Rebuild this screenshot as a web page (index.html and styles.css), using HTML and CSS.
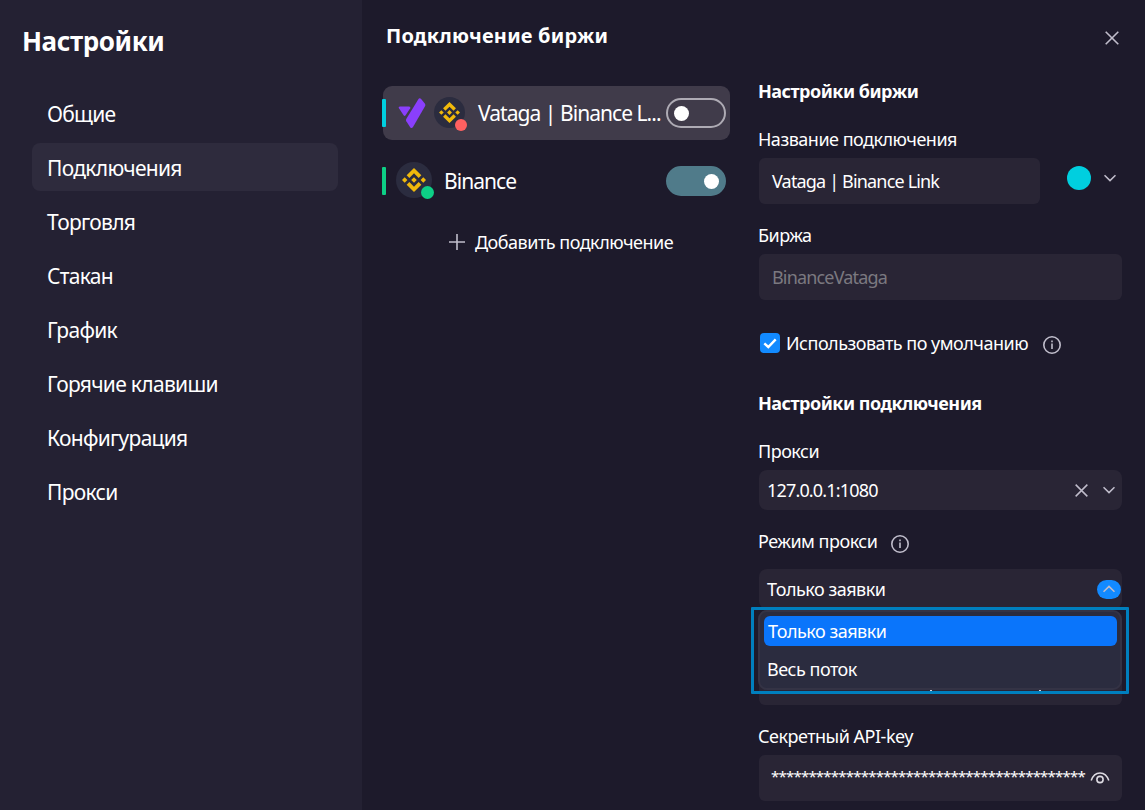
FILE: index.html
```html
<!DOCTYPE html>
<html lang="ru">
<head>
    <meta charset="UTF-8">
    <meta name="viewport" content="width=device-width, initial-scale=1.0">
    <title>Настройки</title>
    <link rel="stylesheet" href="styles.css">
</head>
<body>
    <!-- shared icons -->
    <svg class="sprite" width="0" height="0">
        <symbol id="binance" viewBox="0 0 24 24">
            <path d="M7.35 9.95 12 5.3l4.65 4.65 2.7-2.7L12 0 4.65 7.25zM0 12l2.7-2.7L5.4 12l-2.7 2.7zM7.35 14.05 12 18.7l4.65-4.65 2.7 2.7L12 24l-7.35-7.25zM18.6 12l2.7-2.7L24 12l-2.7 2.7zM9.2 12 12 9.2l2.8 2.8-2.8 2.8z"/>
        </symbol>
        <symbol id="info" viewBox="0 0 18 18">
            <circle cx="9" cy="9" r="8.2"/>
            <path d="M9 7.500v5.500M9 4.500v1.700"/>
        </symbol>
        <symbol id="chevron" viewBox="0 0 12 8">
            <path d="M0.5 1.2 6 6.6l5.5-5.4"/>
        </symbol>
        <symbol id="cross" viewBox="0 0 14 14">
            <path d="M0.7 0.7 13.3 13.3M13.3 0.7 0.7 13.3"/>
        </symbol>
    </svg>

    <div class="window">
        <aside class="sidebar">
            <h1 class="sidebar-title">Настройки</h1>
            <nav class="menu">
                <a class="menu-item">Общие</a>
                <a class="menu-item active">Подключения</a>
                <a class="menu-item">Торговля</a>
                <a class="menu-item">Стакан</a>
                <a class="menu-item">График</a>
                <a class="menu-item">Горячие клавиши</a>
                <a class="menu-item">Конфигурация</a>
                <a class="menu-item">Прокси</a>
            </nav>
        </aside>

        <main class="content">
            <header class="header">
                <h2 class="header-title">Подключение биржи</h2>
                <svg class="icon close"><use href="#cross"/></svg>
            </header>

            <div class="columns">
                <section class="connections">
                    <div class="connection selected">
                        <span class="bar cyan"></span>
                        <svg class="vataga" viewBox="0 0 28 31">
                            <path d="M2 8.5h9q2 0 1.2 1.7L7.6 17.3q-1 1.3-2 0L1 10.3Q0 8.500 2 8.500z"/>
                            <path d="M20.200 1.400q1.200-1.800 2.700-.6l3.900 4.600q.9 1.200.2 2.800L15 29q-1.400 2-2.800.2L8.300 23.300q-.7-1.200.1-2.600z"/>
                        </svg>
                        <span class="avatar small">
                            <svg class="coin"><use href="#binance"/></svg>
                            <i class="status red"></i>
                        </span>
                        <span class="name">Vataga | Binance L...</span>
                        <span class="toggle"><i class="knob"></i></span>
                    </div>
                    <div class="connection">
                        <span class="bar green"></span>
                        <span class="avatar">
                            <svg class="coin"><use href="#binance"/></svg>
                            <i class="status green"></i>
                        </span>
                        <span class="name">Binance</span>
                        <span class="toggle on"><i class="knob"></i></span>
                    </div>
                    <div class="add">
                        <svg class="icon plus" viewBox="0 0 16 16"><path d="M8 0v16M0 8h16"/></svg>
                        <span>Добавить подключение</span>
                    </div>
                </section>

                <section class="form">
                    <h3 class="form-title">Настройки биржи</h3>

                    <div class="label">Название подключения</div>
                    <div class="name-row">
                        <div class="field name-field latin">Vataga | Binance Link</div>
                        <span class="color"></span>
                        <svg class="icon chevron"><use href="#chevron"/></svg>
                    </div>

                    <div class="label spaced">Биржа</div>
                    <div class="field disabled latin">BinanceVataga</div>

                    <div class="check-row">
                        <span class="checkbox">
                            <svg viewBox="0 0 20 20"><path d="M4.300 10.300 8.300 14l7.400-7.700"/></svg>
                        </span>
                        <span class="check-text">Использовать по умолчанию</span>
                        <svg class="icon info"><use href="#info"/></svg>
                    </div>

                    <h3 class="form-title second">Настройки подключения</h3>

                    <div class="label">Прокси</div>
                    <div class="field select">
                        <span class="value latin">127.0.0.1:1080</span>
                        <svg class="icon clear" viewBox="0 0 14 14"><use href="#cross"/></svg>
                        <svg class="icon chevron"><use href="#chevron"/></svg>
                    </div>

                    <div class="label spaced mode-label">
                        <span>Режим прокси</span>
                        <svg class="icon info"><use href="#info"/></svg>
                    </div>
                    <div class="mode">
                        <div class="field select open">
                            <span class="value">Только заявки</span>
                            <span class="arrow"><svg class="icon chevron up"><use href="#chevron"/></svg></span>
                        </div>
                        <div class="dropdown">
                            <div class="options">
                                <div class="option current">Только заявки</div>
                                <div class="option">Весь поток</div>
                            </div>
                        </div>
                    </div>

                    <div class="field key-field">
                        <i class="tail"></i>
                        <i class="tail"></i>
                    </div>

                    <div class="label spaced">Секретный API-key</div>
                    <div class="field secret">
                        <span class="stars">******************************************</span>
                        <svg class="icon eye" viewBox="0 0 20 12"><path d="M1.200 8.600C2.800 3.800 6 1 10 1s7.200 2.800 8.800 7.600"/><circle cx="10" cy="7.500" r="3.100"/></svg>
                    </div>
                </section>
            </div>
        </main>
    </div>
</body>
</html>
```

FILE: styles.css
```css
* {
    box-sizing: border-box;
}
body {
    margin: 0;
    font-family: "Noto Sans", "Open Sans", sans-serif;
    font-size: 18px;
    letter-spacing: -0.5px;
    color: #fff;
    background: #1d1a2b;
    overflow: hidden;
}
h1, h2, h3 {
    margin: 0;
}
.sprite {
    position: absolute;
}
.window {
    display: flex;
    width: 1145px;
    height: 810px;
    overflow: hidden;
}
.icon {
    display: block;
    flex: none;
    fill: none;
    stroke: #c0bdcb;
    stroke-width: 1.6;
}
.latin {
    letter-spacing: -0.83px;
}

/* sidebar */
.sidebar {
    width: 362px;
    background: #242133;
    padding: 23px 24px 0 22px;
}
.sidebar-title {
    font-size: 26px;
    line-height: 36px;
    letter-spacing: -0.4px;
}
.menu {
    display: flex;
    flex-direction: column;
    gap: 6px;
    margin: 30px 0 0 10px;
}
.menu-item {
    display: flex;
    align-items: center;
    height: 48px;
    padding: 1px 0 0 15px;
    border-radius: 8px;
    font-size: 21px;
    letter-spacing: -0.7px;
}
.active {
    background: #2e2b3d;
}

/* header */
.content {
    flex: 1;
    padding: 20px 23px 0 20px;
}
.header {
    display: flex;
    justify-content: space-between;
    height: 60px;
    padding-left: 4px;
}
.header-title {
    font-size: 20px;
    line-height: 32px;
    letter-spacing: 0.2px;
}
.close {
    width: 14px;
    height: 14px;
    margin: 11px 3px 0 0;
}
.columns {
    display: flex;
    gap: 28px;
}

/* connections */
.connections {
    display: flex;
    flex-direction: column;
    gap: 14px;
    width: 348px;
    padding-top: 6px;
}
.connection {
    display: flex;
    align-items: center;
    height: 54px;
    margin-left: 1px;
    padding-right: 4px;
    border-radius: 9px;
}
.selected {
    background: #403b4a;
}
.bar {
    flex: none;
    width: 4px;
    height: 28px;
    margin-left: -1px;
    border-radius: 1px;
}
.cyan {
    background: #00cfdf;
}
.green {
    background: #0dcf86;
}
.vataga {
    flex: none;
    width: 28px;
    height: 31px;
    margin-left: 12px;
    fill: #8a3ffc;
}
.avatar {
    position: relative;
    display: flex;
    flex: none;
    align-items: center;
    justify-content: center;
    width: 36px;
    height: 36px;
    margin: 0 12px 2px 10px;
    border-radius: 50%;
    background: #2b2c3f;
}
.coin {
    width: 24px;
    height: 24px;
    fill: #f0b90b;
}
.small {
    width: 31px;
    height: 31px;
    margin: 0 13px 1px 8px;
}
.small .coin {
    width: 21px;
    height: 21px;
}
.status {
    position: absolute;
    right: -2px;
    bottom: -1px;
    width: 13px;
    height: 13px;
    border-radius: 50%;
}
.small .status {
    right: -2px;
    bottom: -3px;
    width: 12px;
    height: 12px;
}
.red {
    background: #ff6060;
}
.name {
    flex: 1;
    min-width: 0;
    font-size: 21px;
    letter-spacing: -0.95px;
    white-space: nowrap;
}
.toggle {
    display: flex;
    flex: none;
    align-items: center;
    width: 60px;
    height: 30px;
    padding: 0 5px 0 6px;
    border: 2px solid #aeabb4;
    border-radius: 15px;
}
.toggle.on {
    justify-content: flex-end;
    border-color: #507b8a;
    background: #507b8a;
}
.knob {
    width: 15px;
    height: 15px;
    border-radius: 50%;
    background: #fff;
}
.add {
    display: flex;
    align-items: center;
    gap: 10px;
    height: 24px;
    margin: 8px 0 0 67px;
    white-space: nowrap;
}
.plus {
    width: 16px;
    height: 16px;
}

/* form */
.form {
    width: 364px;
}
.form-title {
    font-size: 18px;
    line-height: 22px;
    margin-bottom: 26px;
}
.second {
    margin-top: 36px;
}
.label {
    height: 24px;
    line-height: 22px;
    margin-bottom: 6px;
}
.spaced {
    margin-top: 20px;
}
.name-row {
    display: flex;
    align-items: center;
}
.field {
    display: flex;
    align-items: center;
    height: 46px;
    margin-left: 1px;
    padding: 0 12px 1px 13px;
    border-radius: 6px;
    background: #292535;
    white-space: nowrap;
}
.name-field {
    width: 281px;
}
.color {
    width: 24px;
    height: 24px;
    margin: 0 13px 6px 27px;
    border-radius: 50%;
    background: #00cfdf;
}
.chevron {
    width: 12px;
    height: 8px;
}
.name-row .chevron {
    margin-bottom: 6px;
}
.disabled {
    color: #7b7980;
}
.check-row {
    display: flex;
    align-items: center;
    height: 24px;
    margin-top: 32px;
    padding-left: 2px;
}
.checkbox {
    width: 20px;
    height: 20px;
    margin: 0 6px 2px 0;
    border-radius: 4px;
    background: #128aff;
}
.checkbox svg {
    display: block;
    fill: none;
    stroke: #fff;
    stroke-width: 2.4;
}
.check-text {
    margin-bottom: 2px;
}
.info {
    width: 18px;
    height: 18px;
}
.check-row .info {
    margin: 2px 0 0 15px;
}
.select {
    height: 40px;
    padding: 0 7px 0 8px;
    border-radius: 8px;
}
.value {
    flex: 1;
}
.clear {
    width: 13px;
    height: 13px;
    margin-right: 15px;
}
.mode-label {
    display: flex;
    align-items: flex-start;
    gap: 14px;
    margin-bottom: 15px;
}
.mode-label .info {
    margin-top: 5px;
}
.mode {
    position: relative;
}
.open {
    padding-right: 1px;
}
.arrow {
    display: flex;
    align-items: center;
    justify-content: center;
    width: 24px;
    height: 19px;
    border-radius: 10px;
    background: #128aff;
}
.up {
    transform: rotate(180deg);
}
.dropdown {
    position: absolute;
    left: -7px;
    top: 38px;
    width: 378px;
    height: 87px;
    padding: 0 4px;
    border: 3px solid #007fbe;
    border-radius: 1px;
}
.options {
    height: 80px;
    padding: 4px 4px;
    border: 2px solid #343345;
    border-radius: 9px;
    background: #2b2c3f;
}
.option {
    height: 30px;
    line-height: 31px;
    margin-bottom: 8px;
    padding-left: 3px;
    border-radius: 6px;
}
.current {
    margin-right: -1px;
    padding-left: 4px;
    background: #0a75fb;
}

/* only the bottom edge is visible under the dropdown */
.key-field {
    align-items: flex-end;
    gap: 107px;
    margin-top: 50px;
    padding: 0 0 13px 171px;
}
.tail {
    width: 2px;
    height: 2px;
    background: #d8d7dc;
}
.secret {
    padding: 0 12px 0 12px;
}
.stars {
    flex: 1;
    min-width: 0;
    margin-bottom: 4px;
    font-size: 15px;
    letter-spacing: -0.79px;
}
.eye {
    width: 20px;
    height: 12px;
    stroke: #dddbe2;
}
```
